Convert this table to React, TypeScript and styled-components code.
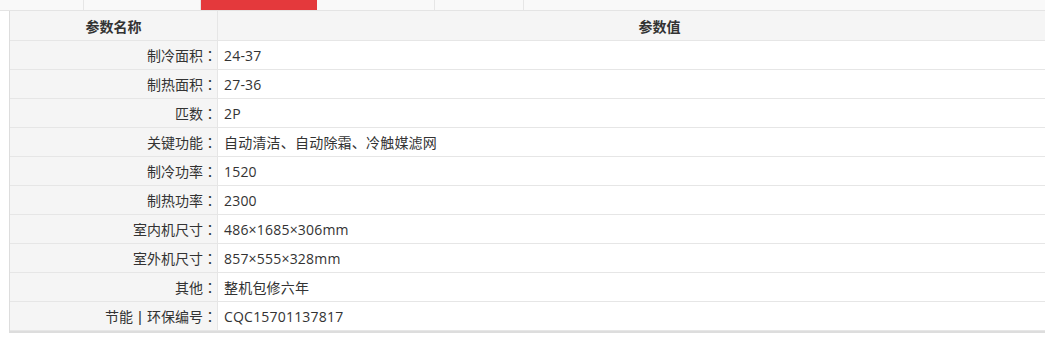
import React from "react";
import styled, { createGlobalStyle } from "styled-components";

const Global = createGlobalStyle`
  html, body { margin: 0; padding: 0; background: #fff; overflow: hidden; }
  body { font-family: "Open Sans", "Noto Sans CJK SC", sans-serif; color: #333; }
`;

const Page = styled.div`
  width: 1101px;
`;

const TabBar = styled.div`
  display: flex;
  height: 10px;
  background: #f9f9f9;
  border-bottom: 1px solid #e4e4e4;
`;

const Tab = styled.div<{ $w: number; $active?: boolean }>`
  flex: 0 0 ${(p) => p.$w}px;
  box-sizing: border-box;
  height: 10px;
  background: ${(p) => (p.$active ? "#e4393c" : "transparent")};
  border-right: 1px solid ${(p) => (p.$active ? "#e4393c" : "#e6e6e6")};
`;

const Table = styled.div`
  margin-left: 9px;
  border-left: 1px solid #dddddd;
  border-bottom: 2px solid #dddddd;
  display: grid;
  grid-template-columns: 208px 1fr;
  font-size: 14px;
`;

const Cell = styled.div<{ $head?: boolean; $label?: boolean }>`
  height: ${(p) => (p.$head ? 29 : 28)}px;
  border-bottom: 1px solid #e6e6e6;
  display: flex;
  align-items: center;
  justify-content: ${(p) => (p.$head ? "center" : p.$label ? "flex-end" : "flex-start")};
  padding: ${(p) => (p.$label || p.$head ? "0" : "0 0 0 6px")};
  background: ${(p) => (p.$head || p.$label ? "#f5f5f5" : "#fff")};
  font-weight: ${(p) => (p.$head ? 700 : 400)};
  border-right: ${(p) => (p.$label ? "1px solid #e6e6e6" : "none")};
  white-space: nowrap;
  color: #333;
  letter-spacing: ${(p) => (p.$label || p.$head ? "0" : "0.2px")};
`;

const Colon = styled.span`
  font-family: "Noto Sans CJK JP", sans-serif;
  letter-spacing: 0;
`;

const Bar = styled.span`
  display: inline-block;
  width: 14px;
  text-align: center;
  font-family: "Liberation Sans", sans-serif;
  font-size: 15px;
  color: #333;
`;

const rows: [string, string][] = [
  ["制冷面积", "24-37"],
  ["制热面积", "27-36"],
  ["匹数", "2P"],
  ["关键功能", "自动清洁、自动除霜、冷触媒滤网"],
  ["制冷功率", "1520"],
  ["制热功率", "2300"],
  ["室内机尺寸", "486×1685×306mm"],
  ["室外机尺寸", "857×555×328mm"],
  ["其他", "整机包修六年"],
];

export default function App() {
  return (
    <Page>
      <Global />
      <TabBar>
        <Tab $w={84} />
        <Tab $w={117} />
        <Tab $w={116} $active />
        <Tab $w={118} />
        <Tab $w={89} />
        <Tab $w={560} />
      </TabBar>
      <Table>
        <Cell $head $label>参数名称</Cell>
        <Cell $head>参数值</Cell>
        {rows.map(([k, v]) => (
          <React.Fragment key={k}>
            <Cell $label>
              {k}
              <Colon>：</Colon>
            </Cell>
            <Cell>{v}</Cell>
          </React.Fragment>
        ))}
        <Cell $label>
          节能<Bar>|</Bar>环保编号<Colon>：</Colon>
        </Cell>
        <Cell>CQC15701137817</Cell>
      </Table>
    </Page>
  );
}
